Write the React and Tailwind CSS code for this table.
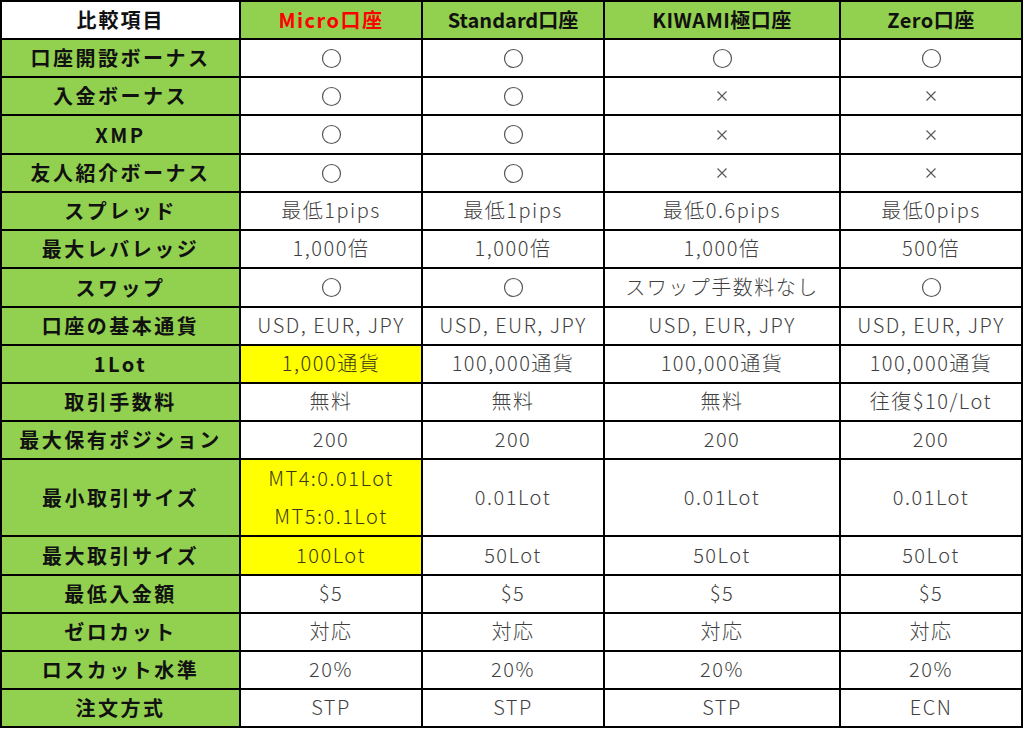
import React from "react";

const G = "bg-[#92d050]";
const rows = [
  ["口座開設ボーナス", ["○", "○", "○", "○"]],
  ["入金ボーナス", ["○", "○", "×", "×"]],
  ["XMP", ["○", "○", "×", "×"]],
  ["友人紹介ボーナス", ["○", "○", "×", "×"]],
  ["スプレッド", ["最低1pips", "最低1pips", "最低0.6pips", "最低0pips"]],
  ["最大レバレッジ", ["1,000倍", "1,000倍", "1,000倍", "500倍"]],
  ["スワップ", ["○", "○", "スワップ手数料なし", "○"]],
  ["口座の基本通貨", ["USD, EUR, JPY", "USD, EUR, JPY", "USD, EUR, JPY", "USD, EUR, JPY"]],
  ["1Lot", ["1,000通貨", "100,000通貨", "100,000通貨", "100,000通貨"], true],
  ["取引手数料", ["無料", "無料", "無料", "往復$10/Lot"]],
  ["最大保有ポジション", ["200", "200", "200", "200"]],
  ["最小取引サイズ", ["MT4:0.01Lot\nMT5:0.1Lot", "0.01Lot", "0.01Lot", "0.01Lot"], true],
  ["最大取引サイズ", ["100Lot", "50Lot", "50Lot", "50Lot"], true],
  ["最低入金額", ["$5", "$5", "$5", "$5"]],
  ["ゼロカット", ["対応", "対応", "対応", "対応"]],
  ["ロスカット水準", ["20%", "20%", "20%", "20%"]],
  ["注文方式", ["STP", "STP", "STP", "ECN"]],
];

const font = { fontFamily: '"Noto Sans CJK JP", "Noto Sans", sans-serif' };

function Cell({ v, yellow }) {
  if (v === "○") {
    return (
      <div className={`flex items-center justify-center ${yellow ? "bg-[#ffff00]" : "bg-white"}`}>
        <svg width="21" height="21" viewBox="0 0 21 21">
          <circle cx="10.5" cy="10.5" r="9" fill="none" stroke="#555" strokeWidth="1.2" />
        </svg>
      </div>
    );
  }
  if (v === "×") {
    return (
      <div className="flex items-center justify-center bg-white">
        <svg width="12" height="12" viewBox="0 0 12 12">
          <path d="M1.5 1.5 L10.5 10.5 M10.5 1.5 L1.5 10.5" stroke="#555" strokeWidth="1.1" />
        </svg>
      </div>
    );
  }
  const lines = v.split("\n");
  return (
    <div
      className={`flex flex-col items-center justify-center gap-[8px] pb-[2px] text-[20px] font-light leading-[30px] tracking-[1.5px] ${
        yellow ? "bg-[#ffff00] text-[#3a3a1a]" : "bg-white text-[#3f3f3f]"
      }`}
    >
      {lines.map((l, i) => (
        <span key={i}>{l}</span>
      ))}
    </div>
  );
}

export default function App() {
  return (
    <div className="w-[1024px] h-[729px] bg-white" style={font}>
      <div className="w-[1023px] bg-black p-[2px] grid gap-[2px] grid-cols-[237px_180px_180px_234px_180px] grid-rows-[36px_36px_36px_37px_36px_36px_36px_37px_36px_36px_36px_36px_75px_37px_36px_36px_36px_36px]">
        <div className="bg-white flex items-center justify-center text-[20px] font-bold tracking-[2px] text-[#111]">比較項目</div>
        <div className={`${G} flex items-center justify-center text-[20px] font-bold tracking-[1.5px] text-[#ff0000]`}>Micro口座</div>
        <div className={`${G} flex items-center justify-center text-[20px] font-bold tracking-[0px] text-[#111]`}>Standard口座</div>
        <div className={`${G} flex items-center justify-center text-[20px] font-bold tracking-[0.5px] text-[#111]`}>KIWAMI極口座</div>
        <div className={`${G} flex items-center justify-center text-[20px] font-bold tracking-[0.5px] text-[#111]`}>Zero口座</div>
        {rows.map(([label, vals, y]) => (
          <React.Fragment key={label}>
            <div className={`${G} flex items-center justify-center text-[20px] font-bold tracking-[2.5px] text-[#111]`}>{label}</div>
            {vals.map((v, i) => (
              <Cell key={i} v={v} yellow={y && i === 0} />
            ))}
          </React.Fragment>
        ))}
      </div>
    </div>
  );
}
